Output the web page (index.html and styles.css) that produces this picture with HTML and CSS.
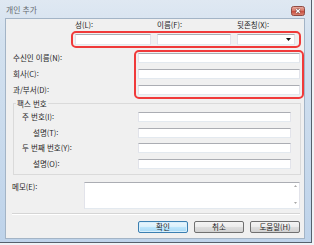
FILE: index.html
```html
<!DOCTYPE html>
<html lang="ko">
<head>
<meta charset="utf-8">
<link rel="stylesheet" href="styles.css">
</head>
<body>
<div class="window">
  <div class="titlebar">
    <span class="title">개인 추가</span>
    <svg class="close" width="14" height="10" viewBox="0 0 14 10">
      <defs>
        <linearGradient id="cg" x1="0" y1="0" x2="0" y2="1">
          <stop offset="0" stop-color="#eab0a4"/>
          <stop offset="0.45" stop-color="#d9796a"/>
          <stop offset="0.5" stop-color="#c84a3c"/>
          <stop offset="1" stop-color="#dc8a78"/>
        </linearGradient>
      </defs>
      <rect x="0.5" y="0.5" width="13" height="9" rx="2" fill="url(#cg)" stroke="#8f4b44"/>
      <path d="M5.2 3.2 L8.8 6.8 M8.8 3.2 L5.2 6.8" stroke="#6b3a36" stroke-width="2.4"/>
      <path d="M5.2 3.2 L8.8 6.8 M8.8 3.2 L5.2 6.8" stroke="#ffffff" stroke-width="1.3"/>
    </svg>
  </div>
  <div class="client">
    <div class="name-labels">
      <span>성(L):</span>
      <span>이름(F):</span>
      <span>뒷존칭(X):</span>
    </div>
    <div class="name-box">
      <div class="field"></div>
      <div class="field"></div>
      <div class="field combo">
        <svg width="5" height="3" viewBox="0 0 5 3"><path d="M0 0 H5 L2.5 3 Z" fill="#111"/></svg>
      </div>
    </div>
    <div class="recipient">
      <div class="recipient-labels">
        <span>수신인 이름(N):</span>
        <span>회사(C):</span>
        <span>과/부서(D):</span>
      </div>
      <div class="recipient-box">
        <div class="field"></div>
        <div class="field"></div>
        <div class="field"></div>
      </div>
    </div>
    <fieldset class="fax">
      <legend>팩스 번호</legend>
      <div class="fax-grid">
        <span class="label">주 번호(I):</span>
        <div class="field"></div>
        <span class="label indent">설명(T):</span>
        <div class="field"></div>
        <span class="label">두 번째 번호(Y):</span>
        <div class="field"></div>
        <span class="label indent">설명(O):</span>
        <div class="field"></div>
      </div>
    </fieldset>
    <div class="memo-row">
      <span class="memo-label">메모(E):</span>
      <div class="field memo">
        <div class="scroll">
          <svg width="3" height="2" viewBox="0 0 3 2"><path d="M0 2 H3 L1.5 0 Z" fill="#a8a8a8"/></svg>
          <svg width="3" height="2" viewBox="0 0 3 2"><path d="M0 0 H3 L1.5 2 Z" fill="#a8a8a8"/></svg>
        </div>
      </div>
    </div>
    <div class="sep"></div>
    <div class="buttons">
      <button class="btn default">확인</button>
      <button class="btn">취소</button>
      <button class="btn">도움말(H)</button>
    </div>
  </div>
</div>
</body>
</html>
```
FILE: styles.css
```css
* { box-sizing: border-box; }
html, body { margin: 0; padding: 0; }
body {
  width: 314px;
  height: 245px;
  overflow: hidden;
  background: #eef2f6;
  font-family: "Noto Sans CJK KR", "Noto Sans", sans-serif;
  font-size: 7.5px;
  color: #1e1e1e;
}
.window {
  width: 312px;
  height: 243px;
  display: flex;
  flex-direction: column;
  padding: 0 6px 3px 5px;
  background: linear-gradient(to bottom, #dfe8f2 0, #d3e1ef 40px, #bed3ea 100%);
  border-right: 1px solid #55616d;
  border-bottom: 1px solid #55616d;
}
.titlebar {
  height: 18px;
  display: flex;
  justify-content: space-between;
  align-items: flex-start;
}
.title {
  margin: 5px 0 0 1px;
  font-size: 7.8px;
  line-height: 10px;
  color: #65696e;
}
.close { display: block; margin-top: 6px; }
.client {
  flex: 1;
  display: flex;
  flex-direction: column;
  background: #f0f0f0;
  border: 1px solid #a3b4c6;
}
.field {
  background: #fff;
  border: 1px solid;
  border-color: #abadb3 #e2e3ea #e3e9ef #e2e3ea;
}
.name-labels {
  display: grid;
  grid-template-columns: 76px 74px 58px;
  column-gap: 6px;
  margin-left: 65px;
  padding-left: 4px;
  height: 12px;
  line-height: 12px;
  white-space: nowrap;
}
.name-box {
  display: grid;
  grid-template-columns: 76px 74px 58px;
  column-gap: 6px;
  margin-left: 65px;
  width: 230px;
  padding: 1px 4px 1px 2px;
  border: 2px solid #f03a3a;
  border-radius: 5px;
}
.name-box .field { height: 11px; }
.combo {
  display: flex;
  align-items: center;
  justify-content: flex-end;
  padding-right: 3px;
}
.combo svg { display: block; }
.recipient { display: flex; margin-top: 2px; }
.recipient-labels {
  margin-left: 7px;
  width: 121px;
  display: flex;
  flex-direction: column;
  gap: 6px;
  padding-top: 3px;
}
.recipient-labels span { height: 10px; line-height: 10px; white-space: nowrap; }
.recipient-box {
  width: 170px;
  border: 2px solid #f03a3a;
  border-radius: 5px;
  padding: 1px 2px 2px 2px;
  display: flex;
  flex-direction: column;
  gap: 6px;
}
.recipient-box .field { height: 10px; }
.fax {
  margin: 0 0 0 7px;
  width: 288px;
  min-inline-size: 0;
  padding: 4px 9px 5.5px 8px;
  border: 1px solid #dadada;
}
.fax legend {
  padding: 0 1px;
  margin-left: -6px;
  line-height: 9px;
}
.fax-grid {
  display: grid;
  grid-template-columns: 116px 153px;
  grid-auto-rows: 10px;
  row-gap: 5.5px;
  align-items: center;
}
.fax-grid .field { height: 10px; }
.label { line-height: 10px; white-space: nowrap; }
.indent { padding-left: 11px; }
.memo-row { display: flex; margin: 7px 0 0 6px; }
.memo-label { width: 72px; line-height: 10px; }
.memo {
  width: 216px;
  height: 27px;
  display: flex;
  justify-content: flex-end;
}
.scroll {
  width: 8px;
  display: flex;
  flex-direction: column;
  justify-content: space-between;
  align-items: center;
  padding: 2px 0 4px;
}
.scroll svg { display: block; }
.sep {
  margin: 4px 0 0 6px;
  width: 288px;
  height: 2px;
  border-top: 1px solid #d5d5d5;
  border-bottom: 1px solid #ffffff;
}
.buttons {
  display: flex;
  justify-content: flex-end;
  gap: 6px;
  margin-top: 6px;
  padding-right: 4px;
}
.btn {
  width: 50px;
  height: 12px;
  padding: 0;
  border: 1px solid #707070;
  border-radius: 2px;
  background: linear-gradient(#f4f4f4 0%, #ececec 50%, #dedede 51%, #d2d2d2 100%);
  font-family: inherit;
  font-size: 7.5px;
  line-height: 10px;
  color: #1e1e1e;
  text-align: center;
}
.btn.default {
  border-color: #3c7fb1;
  background: linear-gradient(#eaf6fd 0%, #d9f0fc 50%, #bee6fd 51%, #a7d9f5 100%);
  box-shadow: inset 0 0 0 1px #d7effc;
}
```
